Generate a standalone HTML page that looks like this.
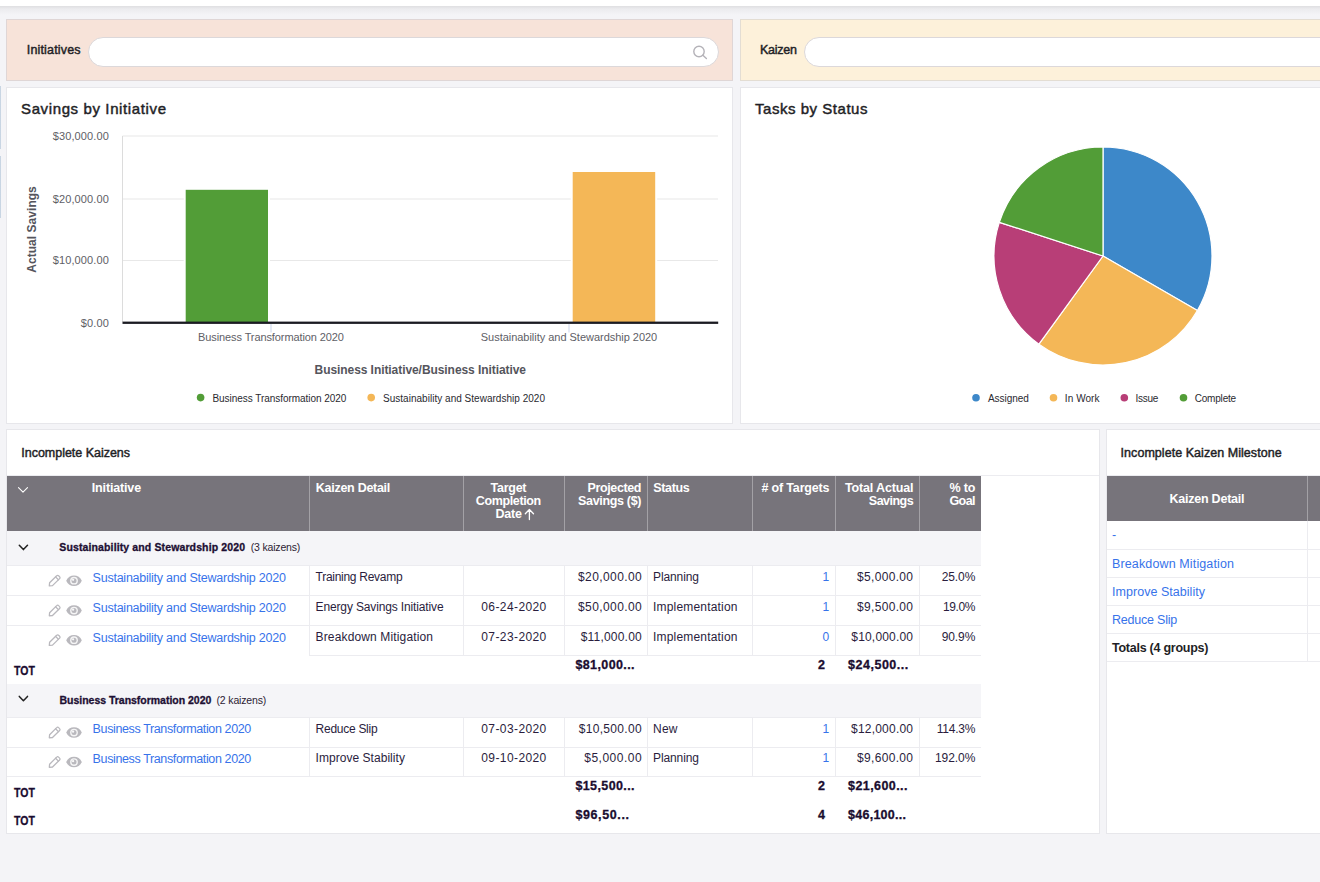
<!DOCTYPE html>
<html lang="en">
<head>
<meta charset="utf-8">
<title>Kaizen Dashboard</title>
<style>
*{box-sizing:border-box;margin:0;padding:0}
html,body{width:1320px;height:882px;overflow:hidden}
body{background:#f4f4f7;font-family:"Liberation Sans",sans-serif;position:relative}
.abs{position:absolute}
.t{position:absolute;white-space:nowrap}
.topbar{position:absolute;left:0;top:0;width:1320px;height:6px;background:#fff}
.topshadow{position:absolute;left:0;top:6px;width:1320px;height:9px;background:linear-gradient(#dfdfe1,#ececef 35%,#f4f4f7)}
.panel{position:absolute;background:#fff;border:1px solid #e7e7eb}
.hline{position:absolute;height:1px;background:#e4e4e8}
.vline{position:absolute;width:1px;background:#e4e4e8}
.input{position:absolute;background:#fff;border:1px solid #dcd8da;border-radius:15px;height:30px}
svg{position:absolute;left:0;top:0;overflow:visible}
</style>
</head>
<body>
<div class="topbar"></div><div class="topshadow"></div>
<!-- left edge tabs -->
<div class="abs" style="left:0;top:86px;width:1.3px;height:63px;background:linear-gradient(90deg,#dde5ee,#b4c6d8)"></div>
<div class="abs" style="left:0;top:156px;width:1.3px;height:62px;background:linear-gradient(90deg,#dde5ee,#b4c6d8)"></div>

<!-- filter panels -->
<div class="panel" style="left:6px;top:19px;width:727px;height:62px;background:#f7e3d9;border-color:#dfd6d6"></div>
<div class="panel" style="left:740px;top:19px;width:600px;height:62px;background:#fdf1da;border-color:#e3ddd3"></div>
<div class="input" style="left:88px;top:37px;width:631px"></div>
<div class="input" style="left:804px;top:37px;width:600px"></div>

<!-- chart panels -->
<div class="panel" style="left:6px;top:87px;width:727px;height:337px"></div>
<div class="panel" style="left:740px;top:87px;width:600px;height:337px"></div>

<!-- table panels -->
<div class="panel" style="left:6px;top:429px;width:1094px;height:405px"></div>
<div class="panel" style="left:1106px;top:429px;width:300px;height:405px"></div>

<div class="abs" style="left:7px;top:475px;width:1092px;height:1px;background:#ececf0"></div>
<div class="abs" style="left:7px;top:476px;width:974px;height:55px;background:#77747b"></div>
<div class="abs" style="left:309px;top:476px;width:1px;height:55px;background:#a3a1a6"></div>
<div class="abs" style="left:463px;top:476px;width:1px;height:55px;background:#a3a1a6"></div>
<div class="abs" style="left:564px;top:476px;width:1px;height:55px;background:#a3a1a6"></div>
<div class="abs" style="left:647px;top:476px;width:1px;height:55px;background:#a3a1a6"></div>
<div class="abs" style="left:752px;top:476px;width:1px;height:55px;background:#a3a1a6"></div>
<div class="abs" style="left:835px;top:476px;width:1px;height:55px;background:#a3a1a6"></div>
<div class="abs" style="left:919px;top:476px;width:1px;height:55px;background:#a3a1a6"></div>
<div class="abs" style="left:7px;top:531px;width:974px;height:34.5px;background:#f5f5f8"></div>
<div class="abs" style="left:7px;top:683.5px;width:974px;height:34px;background:#f5f5f8"></div>
<div class="abs" style="left:7px;top:565px;width:974px;height:1px;background:#ececf0"></div>
<div class="abs" style="left:7px;top:595px;width:974px;height:1px;background:#ececf0"></div>
<div class="abs" style="left:7px;top:625px;width:974px;height:1px;background:#ececf0"></div>
<div class="abs" style="left:309px;top:654.5px;width:672px;height:1px;background:#ececf0"></div>
<div class="abs" style="left:7px;top:717px;width:974px;height:1px;background:#ececf0"></div>
<div class="abs" style="left:7px;top:746.5px;width:974px;height:1px;background:#ececf0"></div>
<div class="abs" style="left:7px;top:776px;width:974px;height:1px;background:#ececf0"></div>
<div class="abs" style="left:309px;top:565px;width:1px;height:90px;background:#ececf0"></div>
<div class="abs" style="left:309px;top:717px;width:1px;height:59.5px;background:#ececf0"></div>
<div class="abs" style="left:463px;top:565px;width:1px;height:90px;background:#ececf0"></div>
<div class="abs" style="left:463px;top:717px;width:1px;height:59.5px;background:#ececf0"></div>
<div class="abs" style="left:564px;top:565px;width:1px;height:90px;background:#ececf0"></div>
<div class="abs" style="left:564px;top:717px;width:1px;height:59.5px;background:#ececf0"></div>
<div class="abs" style="left:647px;top:565px;width:1px;height:90px;background:#ececf0"></div>
<div class="abs" style="left:647px;top:717px;width:1px;height:59.5px;background:#ececf0"></div>
<div class="abs" style="left:752px;top:565px;width:1px;height:90px;background:#ececf0"></div>
<div class="abs" style="left:752px;top:717px;width:1px;height:59.5px;background:#ececf0"></div>
<div class="abs" style="left:835px;top:565px;width:1px;height:90px;background:#ececf0"></div>
<div class="abs" style="left:835px;top:717px;width:1px;height:59.5px;background:#ececf0"></div>
<div class="abs" style="left:919px;top:565px;width:1px;height:90px;background:#ececf0"></div>
<div class="abs" style="left:919px;top:717px;width:1px;height:59.5px;background:#ececf0"></div>
<div class="abs" style="left:1107px;top:475px;width:300px;height:1px;background:#ececf0"></div>
<div class="abs" style="left:1107px;top:476px;width:300px;height:44.5px;background:#77747b"></div>
<div class="abs" style="left:1307px;top:476px;width:1px;height:44.5px;background:#a3a1a6"></div>
<div class="abs" style="left:1107px;top:548.5px;width:300px;height:1px;background:#ececf0"></div>
<div class="abs" style="left:1107px;top:576.5px;width:300px;height:1px;background:#ececf0"></div>
<div class="abs" style="left:1107px;top:604.5px;width:300px;height:1px;background:#ececf0"></div>
<div class="abs" style="left:1107px;top:632.5px;width:300px;height:1px;background:#ececf0"></div>
<div class="abs" style="left:1107px;top:661px;width:300px;height:1px;background:#ececf0"></div>
<div class="abs" style="left:1307px;top:520.5px;width:1px;height:141px;background:#ececf0"></div>
<svg width="1320" height="882" viewBox="0 0 1320 882">
<rect x="122.5" y="135.5" width="595.5" height="1" fill="#e8e8e8"/>
<rect x="122.5" y="198.5" width="595.5" height="1" fill="#e8e8e8"/>
<rect x="122.5" y="260.0" width="595.5" height="1" fill="#e8e8e8"/>
<rect x="122" y="136" width="1" height="186" fill="#dcdcdc"/>
<rect x="183.7" y="187.8" width="86.3" height="135" fill="#fff"/>
<rect x="185.7" y="189.8" width="82.3" height="133" fill="#529d37"/>
<rect x="570.7" y="170" width="86.5" height="153" fill="#fff"/>
<rect x="572.7" y="172" width="82.5" height="151" fill="#f4b757"/>
<rect x="270.5" y="324" width="1" height="8.5" fill="#ccd6eb"/>
<rect x="568.5" y="324" width="1" height="8.5" fill="#ccd6eb"/>
<rect x="122.5" y="321.6" width="595.7" height="2.3" fill="#1b1b22"/>
<circle cx="200.6" cy="397.6" r="3.8" fill="#529d37"/>
<circle cx="371.2" cy="397.6" r="3.8" fill="#f4b757"/>
<path d="M1103 256L1103.00 147.00A109 109 0 0 1 1197.40 310.50Z" fill="#3d88c9" stroke="#fff" stroke-width="1.2" stroke-linejoin="round"/>
<path d="M1103 256L1197.40 310.50A109 109 0 0 1 1038.93 344.18Z" fill="#f4b757" stroke="#fff" stroke-width="1.2" stroke-linejoin="round"/>
<path d="M1103 256L1038.93 344.18A109 109 0 0 1 999.33 222.32Z" fill="#b83e77" stroke="#fff" stroke-width="1.2" stroke-linejoin="round"/>
<path d="M1103 256L999.33 222.32A109 109 0 0 1 1103.00 147.00Z" fill="#529d37" stroke="#fff" stroke-width="1.2" stroke-linejoin="round"/>
<circle cx="976" cy="397.8" r="3.8" fill="#3d88c9"/>
<circle cx="1053.5" cy="397.8" r="3.8" fill="#f4b757"/>
<circle cx="1124.3" cy="397.8" r="3.8" fill="#b83e77"/>
<circle cx="1183.5" cy="397.8" r="3.8" fill="#529d37"/>
<g fill="none" stroke="#b4b2b8" stroke-width="1.4" stroke-linecap="round"><circle cx="699" cy="51.5" r="5.2"/><path d="M702.9 55.3L706.4 58.5"/></g>
<path d="M18.5 487.7L23 492.2L27.5 487.7" fill="none" stroke="#fff" stroke-width="1.1" stroke-linecap="round" stroke-linejoin="round"/>
<path d="M19.3 545.2L23.4 549.6L27.5 545.2" fill="none" stroke="#222" stroke-width="1.5" stroke-linecap="round" stroke-linejoin="round"/>
<path d="M19.3 696.4L23.4 700.8L27.5 696.4" fill="none" stroke="#222" stroke-width="1.5" stroke-linecap="round" stroke-linejoin="round"/>
<path d="M529.4 519.6V509.7M525.3 513.8L529.4 509.5L533.5 513.8" fill="none" stroke="#fff" stroke-width="1.3" stroke-linecap="round" stroke-linejoin="round"/>
<g transform="translate(48.3 574.5)" fill="none" stroke="#b9b8bd" stroke-width="1.3" stroke-linejoin="round" stroke-linecap="round"><path d="M1 11.4L1.3 8.3L8.4 1.2a1.3 1.3 0 0 1 1.9 0L11.3 2.2a1.3 1.3 0 0 1 0 1.9L4.2 11.1Z"/><path d="M7.3 2.4L10.1 5.2"/></g>
<g><path d="M66.2 580.6999999999999C68.8 573.6999999999999 79.2 573.6999999999999 81.8 580.6999999999999C79.2 587.6999999999999 68.8 587.6999999999999 66.2 580.6999999999999Z" fill="#b9b8bd"/><circle cx="74.0" cy="580.6999999999999" r="3.9" fill="#fff" fill-opacity="0.85"/><circle cx="74.0" cy="580.6999999999999" r="2.5" fill="#b9b8bd"/><circle cx="73.1" cy="579.8" r="1.15" fill="#fff" fill-opacity="0.9"/></g>
<g transform="translate(48.3 604.4000000000001)" fill="none" stroke="#b9b8bd" stroke-width="1.3" stroke-linejoin="round" stroke-linecap="round"><path d="M1 11.4L1.3 8.3L8.4 1.2a1.3 1.3 0 0 1 1.9 0L11.3 2.2a1.3 1.3 0 0 1 0 1.9L4.2 11.1Z"/><path d="M7.3 2.4L10.1 5.2"/></g>
<g><path d="M66.2 610.6C68.8 603.6 79.2 603.6 81.8 610.6C79.2 617.6 68.8 617.6 66.2 610.6Z" fill="#b9b8bd"/><circle cx="74.0" cy="610.6" r="3.9" fill="#fff" fill-opacity="0.85"/><circle cx="74.0" cy="610.6" r="2.5" fill="#b9b8bd"/><circle cx="73.1" cy="609.7" r="1.15" fill="#fff" fill-opacity="0.9"/></g>
<g transform="translate(48.3 634.0)" fill="none" stroke="#b9b8bd" stroke-width="1.3" stroke-linejoin="round" stroke-linecap="round"><path d="M1 11.4L1.3 8.3L8.4 1.2a1.3 1.3 0 0 1 1.9 0L11.3 2.2a1.3 1.3 0 0 1 0 1.9L4.2 11.1Z"/><path d="M7.3 2.4L10.1 5.2"/></g>
<g><path d="M66.2 640.1999999999999C68.8 633.1999999999999 79.2 633.1999999999999 81.8 640.1999999999999C79.2 647.1999999999999 68.8 647.1999999999999 66.2 640.1999999999999Z" fill="#b9b8bd"/><circle cx="74.0" cy="640.1999999999999" r="3.9" fill="#fff" fill-opacity="0.85"/><circle cx="74.0" cy="640.1999999999999" r="2.5" fill="#b9b8bd"/><circle cx="73.1" cy="639.3" r="1.15" fill="#fff" fill-opacity="0.9"/></g>
<g transform="translate(48.3 726.4000000000001)" fill="none" stroke="#b9b8bd" stroke-width="1.3" stroke-linejoin="round" stroke-linecap="round"><path d="M1 11.4L1.3 8.3L8.4 1.2a1.3 1.3 0 0 1 1.9 0L11.3 2.2a1.3 1.3 0 0 1 0 1.9L4.2 11.1Z"/><path d="M7.3 2.4L10.1 5.2"/></g>
<g><path d="M66.2 732.6C68.8 725.6 79.2 725.6 81.8 732.6C79.2 739.6 68.8 739.6 66.2 732.6Z" fill="#b9b8bd"/><circle cx="74.0" cy="732.6" r="3.9" fill="#fff" fill-opacity="0.85"/><circle cx="74.0" cy="732.6" r="2.5" fill="#b9b8bd"/><circle cx="73.1" cy="731.7" r="1.15" fill="#fff" fill-opacity="0.9"/></g>
<g transform="translate(48.3 755.9000000000001)" fill="none" stroke="#b9b8bd" stroke-width="1.3" stroke-linejoin="round" stroke-linecap="round"><path d="M1 11.4L1.3 8.3L8.4 1.2a1.3 1.3 0 0 1 1.9 0L11.3 2.2a1.3 1.3 0 0 1 0 1.9L4.2 11.1Z"/><path d="M7.3 2.4L10.1 5.2"/></g>
<g><path d="M66.2 762.1C68.8 755.1 79.2 755.1 81.8 762.1C79.2 769.1 68.8 769.1 66.2 762.1Z" fill="#b9b8bd"/><circle cx="74.0" cy="762.1" r="3.9" fill="#fff" fill-opacity="0.85"/><circle cx="74.0" cy="762.1" r="2.5" fill="#b9b8bd"/><circle cx="73.1" cy="761.2" r="1.15" fill="#fff" fill-opacity="0.9"/></g>
</svg>
<span class="t" style="font-size:12.5px;line-height:14px;top:43.00px;color:#1f1f26;letter-spacing:0.159px;left:26.80px;-webkit-text-stroke:0.45px #1f1f26;">Initiatives</span>
<span class="t" style="font-size:12.5px;line-height:14px;top:43.00px;color:#1f1f26;letter-spacing:-0.247px;left:760.00px;-webkit-text-stroke:0.45px #1f1f26;">Kaizen</span>
<span class="t" style="font-size:15px;line-height:17px;top:100.00px;color:#1f1f26;letter-spacing:0.621px;left:21.00px;-webkit-text-stroke:0.45px #1f1f26;">Savings by Initiative</span>
<span class="t" style="font-size:15px;line-height:17px;top:100.00px;color:#1f1f26;letter-spacing:0.532px;left:755.00px;-webkit-text-stroke:0.45px #1f1f26;">Tasks by Status</span>
<span class="t" style="font-size:11px;line-height:12px;top:130.00px;color:#606066;letter-spacing:0.104px;left:52.80px;">$30,000.00</span>
<span class="t" style="font-size:11px;line-height:12px;top:193.00px;color:#606066;letter-spacing:0.104px;left:52.80px;">$20,000.00</span>
<span class="t" style="font-size:11px;line-height:12px;top:254.00px;color:#606066;letter-spacing:0.104px;left:52.80px;">$10,000.00</span>
<span class="t" style="font-size:11px;line-height:12px;top:317.00px;color:#606066;letter-spacing:0.117px;left:80.80px;">$0.00</span>
<span class="t" style="font-size:12px;line-height:14px;top:-11.00px;color:#55555c;font-weight:700;letter-spacing:0.036px;left:0.00px;transform-origin:0 0;transform:translate(24.6px,272.7px) rotate(-90deg);top:0;">Actual Savings</span>
<span class="t" style="font-size:11px;line-height:12px;top:331.00px;color:#606066;letter-spacing:-0.096px;left:198.00px;">Business Transformation 2020</span>
<span class="t" style="font-size:11px;line-height:12px;top:331.00px;color:#606066;letter-spacing:-0.025px;left:480.75px;">Sustainability and Stewardship 2020</span>
<span class="t" style="font-size:12px;line-height:14px;top:363.00px;color:#55555c;font-weight:700;letter-spacing:-0.068px;left:314.55px;">Business Initiative/Business Initiative</span>
<span class="t" style="font-size:10px;line-height:11px;top:393.00px;color:#2a2a30;letter-spacing:-0.040px;left:212.40px;">Business Transformation 2020</span>
<span class="t" style="font-size:10px;line-height:11px;top:393.00px;color:#2a2a30;letter-spacing:0.023px;left:383.00px;">Sustainability and Stewardship 2020</span>
<span class="t" style="font-size:10px;line-height:11px;top:393.00px;color:#2a2a30;letter-spacing:-0.063px;left:988.00px;">Assigned</span>
<span class="t" style="font-size:10px;line-height:11px;top:393.00px;color:#2a2a30;letter-spacing:0.070px;left:1064.80px;">In Work</span>
<span class="t" style="font-size:10px;line-height:11px;top:393.00px;color:#2a2a30;letter-spacing:-0.277px;left:1135.50px;">Issue</span>
<span class="t" style="font-size:10px;line-height:11px;top:393.00px;color:#2a2a30;letter-spacing:-0.188px;left:1194.70px;">Complete</span>
<span class="t" style="font-size:12.5px;line-height:14px;top:446.00px;color:#1f1f26;letter-spacing:-0.023px;left:21.30px;-webkit-text-stroke:0.45px #1f1f26;">Incomplete Kaizens</span>
<span class="t" style="font-size:12.5px;line-height:14px;top:446.00px;color:#1f1f26;letter-spacing:0.046px;left:1120.60px;-webkit-text-stroke:0.45px #1f1f26;">Incomplete Kaizen Milestone</span>
<span class="t" style="font-size:12.5px;line-height:14px;top:481.00px;color:#ffffff;font-weight:700;letter-spacing:-0.158px;left:91.80px;">Initiative</span>
<span class="t" style="font-size:12.5px;line-height:14px;top:481.00px;color:#ffffff;font-weight:700;letter-spacing:-0.276px;left:315.80px;">Kaizen Detail</span>
<span class="t" style="font-size:12.5px;line-height:14px;top:481.00px;color:#ffffff;font-weight:700;letter-spacing:-0.256px;left:490.50px;">Target</span>
<span class="t" style="font-size:12.5px;line-height:14px;top:494.00px;color:#ffffff;font-weight:700;letter-spacing:-0.361px;left:475.75px;">Completion</span>
<span class="t" style="font-size:12.5px;line-height:14px;top:507.00px;color:#ffffff;font-weight:700;letter-spacing:-0.198px;left:495.40px;">Date</span>
<span class="t" style="font-size:12.5px;line-height:14px;top:481.00px;color:#ffffff;font-weight:700;letter-spacing:-0.371px;left:587.50px;">Projected</span>
<span class="t" style="font-size:12.5px;line-height:14px;top:494.00px;color:#ffffff;font-weight:700;letter-spacing:-0.319px;left:578.00px;">Savings ($)</span>
<span class="t" style="font-size:12.5px;line-height:14px;top:481.00px;color:#ffffff;font-weight:700;letter-spacing:-0.341px;left:653.30px;">Status</span>
<span class="t" style="font-size:12.5px;line-height:14px;top:481.00px;color:#ffffff;font-weight:700;letter-spacing:-0.175px;left:761.50px;"># of Targets</span>
<span class="t" style="font-size:12.5px;line-height:14px;top:481.00px;color:#ffffff;font-weight:700;letter-spacing:-0.151px;left:845.00px;">Total Actual</span>
<span class="t" style="font-size:12.5px;line-height:14px;top:494.00px;color:#ffffff;font-weight:700;letter-spacing:-0.506px;left:868.80px;">Savings</span>
<span class="t" style="font-size:12.5px;line-height:14px;top:481.00px;color:#ffffff;font-weight:700;letter-spacing:-0.130px;left:949.50px;">% to</span>
<span class="t" style="font-size:12.5px;line-height:14px;top:494.00px;color:#ffffff;font-weight:700;letter-spacing:-0.599px;left:949.50px;">Goal</span>
<span class="t" style="font-size:12.5px;line-height:14px;top:492.00px;color:#ffffff;font-weight:700;letter-spacing:-0.234px;left:1169.50px;">Kaizen Detail</span>
<span class="t" style="font-size:10.5px;line-height:12px;top:541.00px;color:#1d0f33;font-weight:700;letter-spacing:0.124px;left:59.30px;-webkit-text-stroke:0.3px #1d0f33;">Sustainability and Stewardship 2020</span>
<span class="t" style="font-size:10.5px;line-height:12px;top:541.00px;color:#2c2233;letter-spacing:-0.176px;left:250.70px;">(3 kaizens)</span>
<span class="t" style="font-size:10.5px;line-height:12px;top:694.00px;color:#1d0f33;font-weight:700;letter-spacing:-0.019px;left:59.50px;-webkit-text-stroke:0.3px #1d0f33;">Business Transformation 2020</span>
<span class="t" style="font-size:10.5px;line-height:12px;top:694.00px;color:#2c2233;letter-spacing:-0.156px;left:216.50px;">(2 kaizens)</span>
<span class="t" style="font-size:12.5px;line-height:14px;top:571.00px;color:#3773ea;letter-spacing:-0.242px;left:92.60px;">Sustainability and Stewardship 2020</span>
<span class="t" style="font-size:12px;line-height:14px;top:570.00px;color:#2a1d3d;letter-spacing:-0.281px;left:315.60px;">Training Revamp</span>
<span class="t" style="font-size:12px;line-height:14px;top:570.00px;color:#2a1d3d;letter-spacing:0.404px;left:578.00px;">$20,000.00</span>
<span class="t" style="font-size:12px;line-height:14px;top:570.00px;color:#2a1d3d;letter-spacing:-0.103px;left:653.00px;">Planning</span>
<span class="t" style="font-size:12px;line-height:14px;top:570.00px;color:#3773ea;left:822.51px;">1</span>
<span class="t" style="font-size:12px;line-height:14px;top:570.00px;color:#2a1d3d;letter-spacing:0.326px;left:857.00px;">$5,000.00</span>
<span class="t" style="font-size:12px;line-height:14px;top:570.00px;color:#2a1d3d;letter-spacing:-0.083px;left:941.70px;">25.0%</span>
<span class="t" style="font-size:12.5px;line-height:14px;top:601.00px;color:#3773ea;letter-spacing:-0.242px;left:92.60px;">Sustainability and Stewardship 2020</span>
<span class="t" style="font-size:12px;line-height:14px;top:600.00px;color:#2a1d3d;letter-spacing:-0.142px;left:315.60px;">Energy Savings Initiative</span>
<span class="t" style="font-size:12px;line-height:14px;top:600.00px;color:#2a1d3d;letter-spacing:0.401px;left:481.30px;">06-24-2020</span>
<span class="t" style="font-size:12px;line-height:14px;top:600.00px;color:#2a1d3d;letter-spacing:0.404px;left:578.00px;">$50,000.00</span>
<span class="t" style="font-size:12px;line-height:14px;top:600.00px;color:#2a1d3d;letter-spacing:0.189px;left:653.00px;">Implementation</span>
<span class="t" style="font-size:12px;line-height:14px;top:600.00px;color:#3773ea;left:822.51px;">1</span>
<span class="t" style="font-size:12px;line-height:14px;top:600.00px;color:#2a1d3d;letter-spacing:0.326px;left:857.00px;">$9,500.00</span>
<span class="t" style="font-size:12px;line-height:14px;top:600.00px;color:#2a1d3d;letter-spacing:-0.383px;left:942.90px;">19.0%</span>
<span class="t" style="font-size:12.5px;line-height:14px;top:631.00px;color:#3773ea;letter-spacing:-0.242px;left:92.60px;">Sustainability and Stewardship 2020</span>
<span class="t" style="font-size:12px;line-height:14px;top:630.00px;color:#2a1d3d;letter-spacing:0.140px;left:315.60px;">Breakdown Mitigation</span>
<span class="t" style="font-size:12px;line-height:14px;top:630.00px;color:#2a1d3d;letter-spacing:0.401px;left:481.30px;">07-23-2020</span>
<span class="t" style="font-size:12px;line-height:14px;top:630.00px;color:#2a1d3d;letter-spacing:0.203px;left:580.70px;">$11,000.00</span>
<span class="t" style="font-size:12px;line-height:14px;top:630.00px;color:#2a1d3d;letter-spacing:0.189px;left:653.00px;">Implementation</span>
<span class="t" style="font-size:12px;line-height:14px;top:630.00px;color:#3773ea;left:822.51px;">0</span>
<span class="t" style="font-size:12px;line-height:14px;top:630.00px;color:#2a1d3d;letter-spacing:0.182px;left:851.30px;">$10,000.00</span>
<span class="t" style="font-size:12px;line-height:14px;top:630.00px;color:#2a1d3d;letter-spacing:-0.083px;left:941.70px;">90.9%</span>
<span class="t" style="font-size:12.5px;line-height:14px;top:722.00px;color:#3773ea;letter-spacing:-0.376px;left:92.60px;">Business Transformation 2020</span>
<span class="t" style="font-size:12px;line-height:14px;top:722.00px;color:#2a1d3d;letter-spacing:-0.272px;left:315.60px;">Reduce Slip</span>
<span class="t" style="font-size:12px;line-height:14px;top:722.00px;color:#2a1d3d;letter-spacing:0.401px;left:481.30px;">07-03-2020</span>
<span class="t" style="font-size:12px;line-height:14px;top:722.00px;color:#2a1d3d;letter-spacing:0.326px;left:578.70px;">$10,500.00</span>
<span class="t" style="font-size:12px;line-height:14px;top:722.00px;color:#2a1d3d;letter-spacing:0.242px;left:653.00px;">New</span>
<span class="t" style="font-size:12px;line-height:14px;top:722.00px;color:#3773ea;left:822.51px;">1</span>
<span class="t" style="font-size:12px;line-height:14px;top:722.00px;color:#2a1d3d;letter-spacing:0.215px;left:851.00px;">$12,000.00</span>
<span class="t" style="font-size:12px;line-height:14px;top:722.00px;color:#2a1d3d;letter-spacing:-0.222px;left:936.70px;">114.3%</span>
<span class="t" style="font-size:12.5px;line-height:14px;top:752.00px;color:#3773ea;letter-spacing:-0.376px;left:92.60px;">Business Transformation 2020</span>
<span class="t" style="font-size:12px;line-height:14px;top:751.00px;color:#2a1d3d;letter-spacing:0.037px;left:315.60px;">Improve Stability</span>
<span class="t" style="font-size:12px;line-height:14px;top:751.00px;color:#2a1d3d;letter-spacing:0.401px;left:481.30px;">09-10-2020</span>
<span class="t" style="font-size:12px;line-height:14px;top:751.00px;color:#2a1d3d;letter-spacing:0.514px;left:584.20px;">$5,000.00</span>
<span class="t" style="font-size:12px;line-height:14px;top:751.00px;color:#2a1d3d;letter-spacing:-0.103px;left:653.00px;">Planning</span>
<span class="t" style="font-size:12px;line-height:14px;top:751.00px;color:#3773ea;left:822.51px;">1</span>
<span class="t" style="font-size:12px;line-height:14px;top:751.00px;color:#2a1d3d;letter-spacing:0.326px;left:857.00px;">$9,600.00</span>
<span class="t" style="font-size:12px;line-height:14px;top:751.00px;color:#2a1d3d;letter-spacing:-0.041px;left:934.90px;">192.0%</span>
<span class="t" style="font-size:12px;line-height:14px;top:664.00px;color:#1a0c2e;font-weight:700;left:13.80px;-webkit-text-stroke:0.3px #1d0f33;transform-origin:0 50%;transform:scaleX(.875);">TOT</span>
<span class="t" style="font-size:12.5px;line-height:14px;top:658.00px;color:#1a0c2e;font-weight:700;letter-spacing:0.399px;left:575.40px;-webkit-text-stroke:0.3px #1d0f33;">$81,000...</span>
<span class="t" style="font-size:12.5px;line-height:14px;top:658.00px;color:#1a0c2e;font-weight:700;left:818.05px;-webkit-text-stroke:0.3px #1d0f33;">2</span>
<span class="t" style="font-size:12.5px;line-height:14px;top:658.00px;color:#1a0c2e;font-weight:700;letter-spacing:0.521px;left:848.00px;-webkit-text-stroke:0.3px #1d0f33;">$24,500...</span>
<span class="t" style="font-size:12px;line-height:14px;top:786.00px;color:#1a0c2e;font-weight:700;left:13.80px;-webkit-text-stroke:0.3px #1d0f33;transform-origin:0 50%;transform:scaleX(.875);">TOT</span>
<span class="t" style="font-size:12.5px;line-height:14px;top:779.00px;color:#1a0c2e;font-weight:700;letter-spacing:0.399px;left:575.40px;-webkit-text-stroke:0.3px #1d0f33;">$15,500...</span>
<span class="t" style="font-size:12.5px;line-height:14px;top:779.00px;color:#1a0c2e;font-weight:700;left:818.05px;-webkit-text-stroke:0.3px #1d0f33;">2</span>
<span class="t" style="font-size:12.5px;line-height:14px;top:779.00px;color:#1a0c2e;font-weight:700;letter-spacing:0.432px;left:848.00px;-webkit-text-stroke:0.3px #1d0f33;">$21,600...</span>
<span class="t" style="font-size:12px;line-height:14px;top:814.00px;color:#1a0c2e;font-weight:700;left:13.80px;-webkit-text-stroke:0.3px #1d0f33;transform-origin:0 50%;transform:scaleX(.875);">TOT</span>
<span class="t" style="font-size:12.5px;line-height:14px;top:808.00px;color:#1a0c2e;font-weight:700;letter-spacing:0.618px;left:575.40px;-webkit-text-stroke:0.3px #1d0f33;">$96,50...</span>
<span class="t" style="font-size:12.5px;line-height:14px;top:808.00px;color:#1a0c2e;font-weight:700;left:818.05px;-webkit-text-stroke:0.3px #1d0f33;">4</span>
<span class="t" style="font-size:12.5px;line-height:14px;top:808.00px;color:#1a0c2e;font-weight:700;letter-spacing:0.266px;left:848.00px;-webkit-text-stroke:0.3px #1d0f33;">$46,100...</span>
<span class="t" style="font-size:12.5px;line-height:14px;top:528.00px;color:#3773ea;left:1112.00px;">-</span>
<span class="t" style="font-size:12.5px;line-height:14px;top:557.00px;color:#3773ea;letter-spacing:0.131px;left:1112.00px;">Breakdown Mitigation</span>
<span class="t" style="font-size:12.5px;line-height:14px;top:585.00px;color:#3773ea;letter-spacing:0.037px;left:1112.00px;">Improve Stability</span>
<span class="t" style="font-size:12.5px;line-height:14px;top:613.00px;color:#3773ea;letter-spacing:-0.221px;left:1112.00px;">Reduce Slip</span>
<span class="t" style="font-size:12.5px;line-height:14px;top:641.00px;color:#1f1f26;font-weight:700;letter-spacing:-0.254px;left:1112.00px;">Totals (4 groups)</span>
</body>
</html>
